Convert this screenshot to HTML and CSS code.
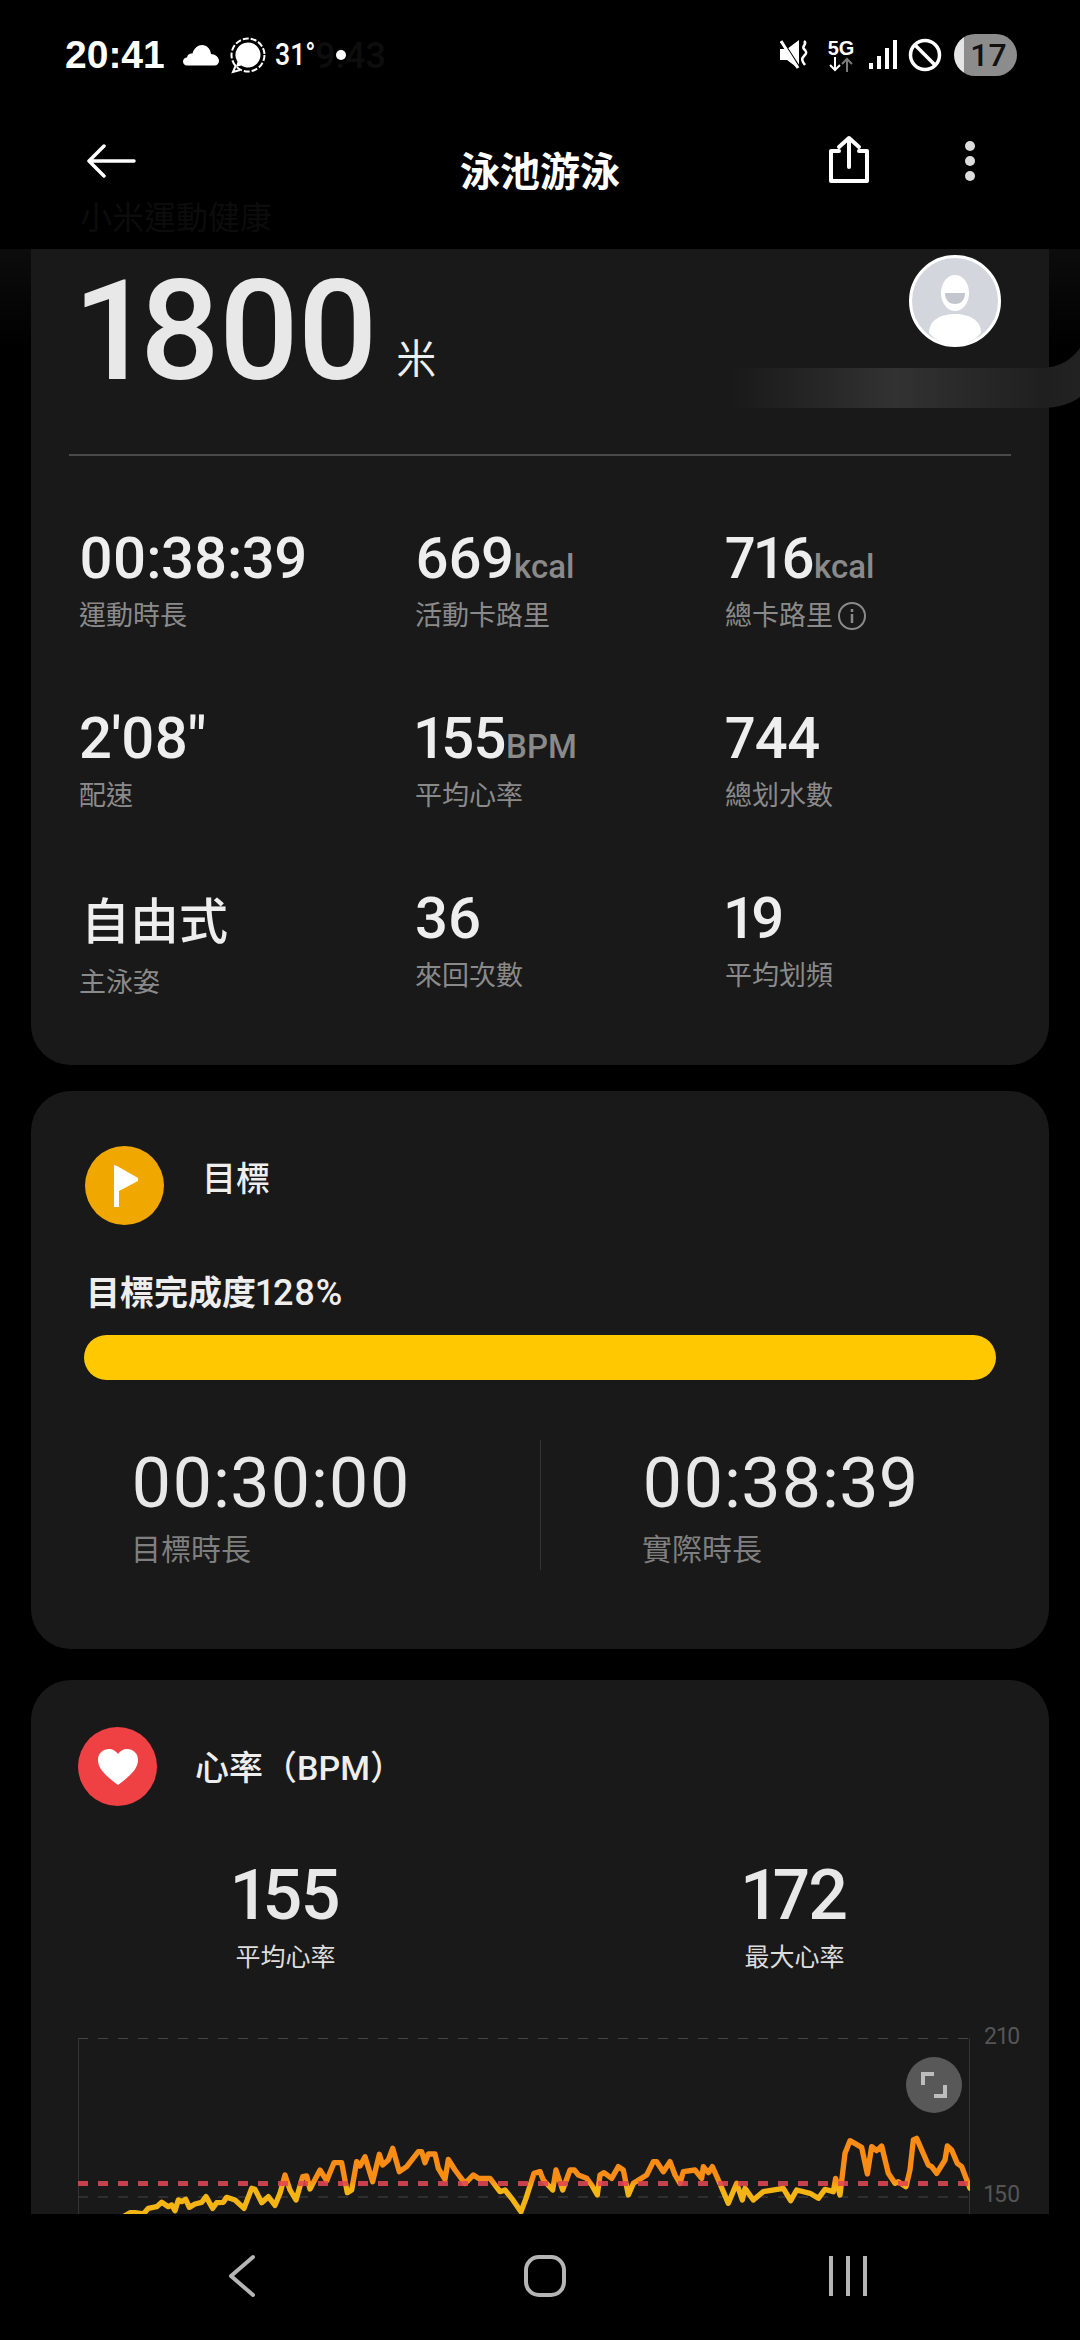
FILE: index.html
```html
<!DOCTYPE html>
<html lang="zh-Hant">
<head>
    <meta charset="UTF-8">
    <meta name="viewport" content="width=device-width, initial-scale=1.0">
    <title>泳池游泳</title>
    <link rel="stylesheet" href="styles.css">
</head>
<body>
<div class="screen">

    <!-- status bar -->
    <div class="status-bar">
        <span class="ghost-time">9:43</span>
        <div class="status-left">
            <span class="clock">20:41</span>
            <svg class="ic-cloud" width="36" height="22" viewBox="0 0 36 22"><path fill="#fff" d="M4 21.500C1.500 21.500 0 19.700 0 17.500C0 15.300 1.700 13.600 4 13.500C4.500 10.500 7 9 9.500 9.500C11 4 15 1 19 1C24 1 27.500 5 28 10C32 10 36 13 36 17C36 19.700 34 21.500 31.500 21.500Z"/></svg>
            <svg class="ic-signal" width="38" height="38" viewBox="0 0 38 38"><circle cx="20" cy="18" r="16.500" fill="none" stroke="#fff" stroke-width="2" stroke-dasharray="6 2"/><path fill="#fff" d="M20 5.500a12.500 12.500 0 1 1-6.800 23l-5.200 1.500 1.500-5.200A12.500 12.500 0 0 1 20 5.500Z"/><path fill="none" stroke="#fff" stroke-width="2" d="M8 28l-3 7 7-2"/></svg>
            <span class="temp">31°</span>
            <span class="notif-dot"></span>
        </div>
        <div class="status-right">
            <svg width="30" height="30" viewBox="0 0 30 30"><path fill="#fff" d="M0 9h7L19 0v29L7 20H0Z"/><path stroke="#000" stroke-width="3.500" d="M-1 -3L21 31"/><path stroke="#fff" stroke-width="3" d="M1 1l17 27"/><path fill="none" stroke="#fff" stroke-width="2.500" d="M24 1c4 3-3 5 0 8s3 4 0 7s-2 5 1 9"/></svg>
            <div class="net">
                <span class="net-label">5G</span>
                <svg width="24" height="15" viewBox="0 0 24 15"><path fill="none" stroke="#fff" stroke-width="2" d="M6 0v13M1 8l5 5 5-5"/><path fill="none" stroke="#7a7a7a" stroke-width="2" d="M18 15V2M13 7l5-5 5 5"/></svg>
            </div>
            <svg class="ic-bars" width="28" height="30" viewBox="0 0 28 30"><path fill="#fff" d="M0 23h4v6H0ZM8 16h4v13H8ZM16 8h4v21h-4ZM24 0h4v29h-4Z"/></svg>
            <svg width="34" height="34" viewBox="0 0 34 34"><circle cx="17" cy="17" r="14.500" fill="none" stroke="#fff" stroke-width="3.500"/><path stroke="#fff" stroke-width="3.500" d="M7 7l20 20"/></svg>
            <div class="battery">17</div>
        </div>
    </div>

    <!-- title bar -->
    <div class="app-bar">
        <svg class="ic-back" width="50" height="34" viewBox="0 0 50 34"><path fill="none" stroke="#fff" stroke-width="3.500" stroke-linecap="round" stroke-linejoin="round" d="M48 17H3M18 2L3 17l15 15"/></svg>
        <h1 class="app-title">泳池游泳</h1>
        <div class="app-actions">
            <svg width="42" height="50" viewBox="0 0 42 50"><path fill="none" stroke="#fff" stroke-width="4" stroke-linecap="round" stroke-linejoin="round" d="M11 16H3v30h36V16h-8M21 32V3M11 12L21 3l10 9"/></svg>
            <div class="more-dots"><span></span><span></span><span></span></div>
        </div>
        <span class="ghost-title">小米運動健康</span>
    </div>

    <!-- scroll content -->
    <div class="scroll">
        <svg class="band" width="350" height="62" viewBox="0 0 350 62"><defs><linearGradient id="bandFill"><stop offset="0" stop-color="#191919"/><stop offset=".47" stop-color="#323232"/><stop offset=".9" stop-color="#1f1f1f"/><stop offset="1" stop-color="#222"/></linearGradient></defs><path fill="url(#bandFill)" d="M0 21H310C330 21 342 12 350 1V50C342 56 330 61 310 61H0Z"/></svg>

        <section class="card card-summary">
            <div class="distance"><span class="distance-num">1800</span><span class="distance-unit">米</span></div>
            <svg class="avatar" width="92" height="92" viewBox="0 0 92 92"><circle cx="46" cy="46" r="44.500" fill="#d3d6dd" stroke="#fff" stroke-width="3"/><ellipse cx="46" cy="38" rx="14" ry="18" fill="#fff"/><path fill="#c3c6cd" d="M36 38h20c0 8-5 11-10 11s-10-3-10-11Z"/><path fill="#fff" d="M20 78c0-13 12-19 26-19s26 6 26 19c-7 8-16 12-26 12s-19-4-26-12Z"/></svg>
            <div class="rule"></div>

            <div class="stats">
                <div class="stat"><div class="stat-val">00:38:39</div><div class="stat-label">運動時長</div></div>
                <div class="stat"><div class="stat-val">669<span class="unit">kcal</span></div><div class="stat-label">活動卡路里</div></div>
                <div class="stat"><div class="stat-val">716<span class="unit">kcal</span></div>
                    <div class="stat-label">總卡路里
                        <svg class="ic-info" width="30" height="30" viewBox="0 0 30 30"><circle cx="15" cy="15" r="13" fill="none" stroke="#8a8a8a" stroke-width="2"/><path stroke="#8a8a8a" stroke-width="2.500" d="M15 13v9M15 8v3"/></svg>
                    </div>
                </div>
                <div class="stat"><div class="stat-val">2'08"</div><div class="stat-label">配速</div></div>
                <div class="stat"><div class="stat-val">155<span class="unit">BPM</span></div><div class="stat-label">平均心率</div></div>
                <div class="stat"><div class="stat-val">744</div><div class="stat-label">總划水數</div></div>
                <div class="stat"><div class="stat-val stat-cjk">自由式</div><div class="stat-label">主泳姿</div></div>
                <div class="stat"><div class="stat-val">36</div><div class="stat-label">來回次數</div></div>
                <div class="stat"><div class="stat-val">19</div><div class="stat-label">平均划頻</div></div>
            </div>
        </section>

        <section class="card card-goal">
            <div class="card-head">
                <span class="badge badge-goal">
                    <svg width="26" height="42" viewBox="0 0 26 42"><path fill="#fff" d="M0 0l3 1 21 12v3L5 26v16H0Z"/></svg>
                </span>
                <h2 class="card-title">目標</h2>
            </div>
            <div class="goal-text">目標完成度<span class="goal-pct">128%</span></div>
            <div class="goal-bar"></div>
            <div class="goal-times">
                <div class="goal-col">
                    <div class="goal-val">00:30:00</div>
                    <div class="goal-label">目標時長</div>
                </div>
                <div class="goal-col goal-col-right">
                    <div class="goal-val">00:38:39</div>
                    <div class="goal-label">實際時長</div>
                </div>
            </div>
        </section>

        <section class="card card-heart">
            <div class="card-head">
                <span class="badge badge-heart">
                    <svg width="40" height="36" viewBox="0 0 40 36"><path fill="#fff" d="M20 36C8 27 0 20 0 11C0 4 5 0 11 0C15 0 18 2 20 5C22 2 25 0 29 0C35 0 40 4 40 11C40 20 32 27 20 36Z"/></svg>
                </span>
                <h2 class="card-title">心率（BPM）</h2>
            </div>
            <div class="hr-stats">
                <div class="hr-col"><div class="hr-val">155</div><div class="hr-label">平均心率</div></div>
                <div class="hr-col"><div class="hr-val">172</div><div class="hr-label">最大心率</div></div>
            </div>
            <div class="chart">
                <svg class="chart-plot" width="892" height="176" viewBox="0 0 2676 528">
                    <defs>
                        <linearGradient id="hrLine" gradientUnits="userSpaceOnUse" x1="0" y1="0" x2="0" y2="600">
                            <stop offset=".8" stop-color="#f98c14"/>
                            <stop offset=".84" stop-color="#f4b414"/>
                        </linearGradient>
                    </defs>
                    <path class="grid-line" d="M0 1.500H2676"/>
                    <path class="grid-line" d="M0 477H2676"/>
                    <polyline class="hr-line" transform="translate(-54 -54)" points="190,590 210,578 225,578 250,582 265,565 290,560 305,547 325,560 335,555 345,572 355,540 365,545 377,538 388,562 405,552 425,547 438,530 458,565 470,548 490,547 500,532 525,540 552,565 575,505 585,508 605,548 625,530 645,556 660,520 675,465 690,510 708,540 728,470 740,468 750,507 780,450 800,482 822,428 845,428 862,518 875,510 890,425 900,438 915,410 938,485 958,403 968,435 985,420 998,385 1018,455 1040,440 1075,395 1085,395 1095,428 1105,402 1125,402 1135,445 1155,478 1165,418 1185,450 1215,490 1240,465 1255,475 1290,475 1320,515 1335,510 1355,535 1383,575 1398,535 1422,460 1440,455"/>
                    <polyline class="hr-line" transform="translate(1386 -54)" points="0,455 10,480 38,510 48,450 68,510 90,450 103,450 115,465 140,475 155,495 172,525 180,465 192,458 215,475 235,440 250,450 265,525 280,490 320,465 340,425 350,425 370,455 390,425 405,465 420,490 430,455 465,450 485,475 490,440 505,458 517,440 535,480 565,550 590,490 607,540 615,505 640,540 670,515 730,505 752,542 770,510 810,520 835,535 855,508 880,515 887,475 900,525 915,400 930,362 965,382 982,462 995,380 1010,392 1025,378 1045,460 1065,490 1075,485 1098,500 1110,450 1120,360 1130,355 1165,435 1175,440 1190,460 1215,420 1222,378 1235,390 1252,430 1265,440 1290,505"/>
                    <path class="avg-line" d="M0 436.500H2676"/>
                </svg>
                <span class="axis-label axis-top">210</span>
                <span class="axis-label axis-mid">150</span>
                <span class="expand-btn">
                    <svg width="26" height="26" viewBox="0 0 26 26"><path fill="none" stroke="#bdbdbd" stroke-width="4" d="M13 2H2v11M13 24h11V13"/></svg>
                </span>
            </div>
        </section>
    </div>

    <!-- nav bar -->
    <div class="nav-bar">
        <div class="nav-cell"><svg width="28" height="44" viewBox="0 0 28 44"><path fill="none" stroke="#b5b5b5" stroke-width="4" stroke-linecap="round" stroke-linejoin="round" d="M25 3L3 22l22 19"/></svg></div>
        <div class="nav-cell"><span class="nav-home"></span></div>
        <div class="nav-cell"><svg width="40" height="40" viewBox="0 0 40 40"><path stroke="#b5b5b5" stroke-width="4" d="M3 0v40M20 0v40M37 0v40"/></svg></div>
    </div>
</div>
</body>
</html>
```

FILE: styles.css
```css
* { box-sizing: border-box; }
html, body { margin: 0; padding: 0; background: #000; }
body { font-family: Roboto, "Noto Sans CJK TC", sans-serif; color: #eee; font-feature-settings: "pnum"; }
svg { display: block; flex: none; }
h1, h2 { margin: 0; }

.screen { width: 1080px; height: 2340px; display: flex; flex-direction: column; overflow: hidden; background: #000; }

/* status bar */
.status-bar { position: relative; height: 110px; flex: none; padding: 34px 63px 0 65px; display: flex; justify-content: space-between; align-items: flex-start; }
.status-left { position: relative; display: flex; align-items: center; height: 42px; }
.status-right { display: flex; align-items: center; height: 42px; }
.clock { font: bold 39px/42px "Liberation Sans", sans-serif; color: #fff; width: 118px; }
.ic-signal { margin-left: 9px; margin-top: 2px; }
.temp { font: 500 31px/42px Roboto, sans-serif; color: #fff; margin-left: 9px; transform: scaleX(.86); transform-origin: left; width: 59px; }
.notif-dot { width: 10px; height: 10px; border-radius: 50%; background: #fff; margin-left: 2px; }
.ghost-time { position: absolute; left: 315px; top: 36px; font: 500 36px/40px Roboto, sans-serif; color: #0d0d0d; }
.status-right > svg:first-child { margin-right: 19px; }
.net { display: flex; flex-direction: column; align-items: center; width: 24px; margin-right: 16px; }
.net-label { font: bold 20px/18px "Liberation Sans", sans-serif; color: #fff; }
.ic-bars { margin-right: 11px; }
.battery { width: 63px; height: 42px; margin-left: 12px; border-radius: 21px; background: linear-gradient(90deg, #e4e4e4 10px, #8c8c8c 10px); color: #111; font: 500 32px/42px Roboto, sans-serif; text-align: center; padding-left: 6px; }

/* title bar */
.app-bar { position: relative; height: 139px; flex: none; display: grid; grid-template-columns: 1fr auto 1fr; padding-top: 25px; }
.ic-back { margin: 9px 0 0 86px; }
.app-title { font-size: 40px; line-height: 48px; font-weight: 700; color: #fff; padding-top: 14px; }
.app-actions { display: flex; padding-left: 208px; align-items: flex-start; }
.more-dots { display: flex; flex-direction: column; gap: 5px; margin-left: 95px; padding-top: 6px; }
.more-dots span { width: 10px; height: 10px; border-radius: 50%; background: #ddd; }
.ghost-title { position: absolute; left: 80px; top: 82px; font-size: 32px; color: #0c0c0c; }

/* scroll area, clipped by the nav bar */
.scroll { position: relative; height: 1965px; flex: none; overflow: hidden; padding: 0 31px; background: linear-gradient(#0c0c0c, #000 100px); }
.band { position: absolute; right: 0; top: 98px; z-index: 2; }

.card { background: #191919; border-radius: 40px; position: relative; }
.card-summary { height: 816px; border-radius: 0 0 40px 40px; padding-top: 12px; }
.card-goal { height: 558px; margin-top: 26px; padding: 55px 0 0 54px; }
.card-heart { margin-top: 31px; padding: 47px 0 0; height: 640px; }

/* summary */
.distance { display: flex; align-items: flex-start; padding-left: 47px; height: 140px; }
.distance-num { font-size: 140px; line-height: 140px; font-weight: 500; color: #e8e8e8; letter-spacing: -3.500px; }
.distance-unit { align-self: flex-end; font-size: 40px; line-height: 40px; margin: 0 0 21px 21px; color: #eee; }
.avatar { position: absolute; top: 6px; right: 48px; z-index: 3; }
.rule { height: 2px; background: #4a4a4a; margin: 53px 38px 0; }
.stats { display: grid; grid-template-columns: 336px 310px 1fr; grid-auto-rows: 180px; padding: 69px 0 0 48px; }
.stat-val { font-size: 58px; line-height: 66px; font-weight: 500; color: #eee; white-space: nowrap; letter-spacing: -.5px; }
.stat-cjk { font-size: 49px; line-height: 70px; padding: 3px 0 0 2px; letter-spacing: 0; }
.unit { font-size: 33px; line-height: 1; color: #8a8a8a; margin-left: 0; letter-spacing: 0; }
.stat-label { display: flex; align-items: center; gap: 4px; font-size: 27px; line-height: 36px; color: #8a8a8a; margin-top: 7px; }

/* card headers */
.card-head { display: flex; align-items: center; height: 79px; }
.badge { width: 79px; height: 79px; border-radius: 50%; display: flex; align-items: center; justify-content: center; flex: none; }
.badge-goal { background: #f0a800; padding-left: 4px; }
.badge-heart { background: #ef4044; margin-left: 47px; }
.card-title { font-size: 34px; font-weight: 500; color: #eee; margin-left: 38px; }
.card-goal .card-title { margin-top: -18px; }
.card-heart .card-title { margin-top: -2px; }

/* goal */
.goal-text { font-size: 34px; line-height: 44px; font-weight: 600; color: #eee; margin-top: 46px; padding-left: 1px; }
.goal-pct { font-size: 36px; font-weight: 500; letter-spacing: .5px; }
.goal-bar { width: 912px; height: 45px; margin: 20px 0 0 -1px; border-radius: 23px; background: #ffc800; }
.goal-times { display: grid; grid-template-columns: 455px 1fr; margin-top: 60px; }
.goal-col { height: 130px; padding: 8px 0 0 46px; }
.goal-col-right { border-left: 1px solid #333; padding-left: 101px; }
.goal-val { font-size: 70px; line-height: 70px; color: #e8e8e8; letter-spacing: .3px; }
.goal-label { font-size: 30px; line-height: 40px; color: #7f7f7f; margin-top: 12px; }

/* heart rate */
.hr-stats { display: grid; grid-template-columns: 1fr 1fr; margin-top: 50px; }
.hr-col { text-align: center; }
.hr-val { font-size: 70px; line-height: 78px; font-weight: 500; color: #e8e8e8; letter-spacing: -1.500px; }
.hr-label { font-size: 25px; line-height: 34px; color: #ddd; margin-top: 7px; }

.chart { position: relative; width: 892px; height: 240px; margin: 63px 0 0 47px; border-left: 1px solid #333; border-right: 1px solid #333; }
.chart-plot { position: absolute; left: -1px; top: 0; }
.grid-line { fill: none; stroke: #444; stroke-width: 3; stroke-dasharray: 30 30; }
.avg-line { fill: none; stroke: #e04552; stroke-opacity: .88; stroke-width: 15; stroke-dasharray: 30 30; }
.hr-line { fill: none; stroke: url(#hrLine); stroke-width: 16; stroke-linejoin: round; stroke-linecap: round; }
.axis-label { position: absolute; left: 905px; font-size: 23px; line-height: 28px; color: #555; }
.axis-top { top: -15px; }
.axis-mid { top: 143px; }
.expand-btn { position: absolute; right: 7px; top: 19px; width: 56px; height: 56px; border-radius: 50%; background: #585858; display: flex; align-items: center; justify-content: center; }

/* nav bar */
.nav-bar { flex: 1; display: flex; justify-content: center; padding: 40px 0 0 10px; background: #000; position: relative; }
.nav-cell { width: 303px; height: 44px; display: flex; align-items: center; justify-content: center; }
.nav-home { width: 42px; height: 42px; border: 4px solid #b5b5b5; border-radius: 15px; }
```
